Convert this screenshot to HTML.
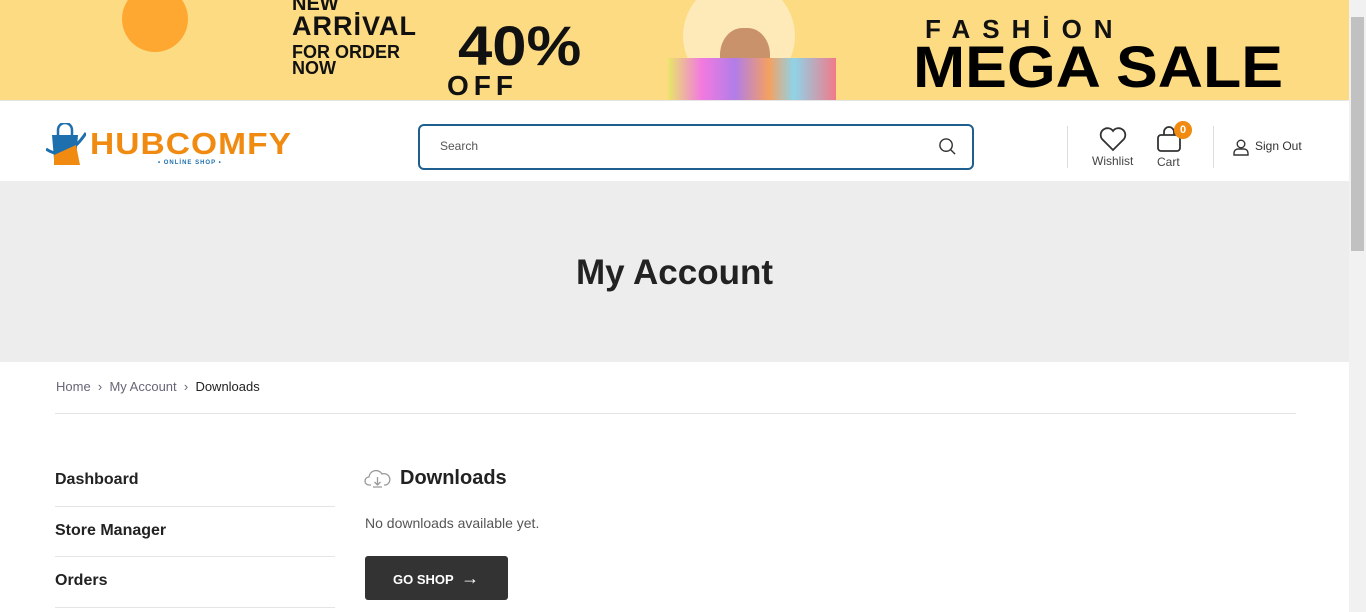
<!DOCTYPE html>
<html><head><meta charset="utf-8"><style>
*{margin:0;padding:0;box-sizing:border-box}
body{width:1366px;height:612px;overflow:hidden;font-family:"Liberation Sans",sans-serif;background:#fff;position:relative;color:#222}
.abs{position:absolute}
.banner{left:0;top:0;width:1349px;height:100px;background:#fcdb82;overflow:hidden}
.sb{left:1349px;top:0;width:17px;height:612px;background:#f1f1f1}
.sbt{left:1351px;top:17px;width:13px;height:234px;background:#c1c1c1}
.hdr{left:0;top:100px;width:1349px;height:81px;background:#fff;border-top:1px solid #e5e5e5}
.hero{left:0;top:181px;width:1349px;height:181px;background:#ededed}
</style></head><body>
<div class="abs banner">
 <div class="abs" style="left:122px;top:-14px;width:66px;height:66px;border-radius:50%;background:#fea832"></div>
 <div class="abs" style="left:292px;top:-6px;font-weight:900;font-size:20px;line-height:20px;color:#111">NEW<br><span style="font-size:27px;letter-spacing:1px;display:inline-block;margin-top:2px">ARRİVAL</span></div>
 <div class="abs" style="left:292px;top:44px;font-weight:bold;font-size:18px;line-height:16px;color:#111">FOR ORDER<br>NOW</div>
 <div class="abs" style="left:458px;top:18px;font-weight:900;font-size:56px;line-height:56px;color:#111;transform:scaleX(1.1);transform-origin:left">40%</div>
 <div class="abs" style="left:447px;top:70px;font-weight:900;font-size:28px;letter-spacing:5px;color:#111">OFF</div>
 <div class="abs" style="left:683px;top:-20px;width:112px;height:112px;border-radius:50%;background:#fdeab8"></div>
 <div class="abs" style="left:720px;top:28px;width:50px;height:60px;border-radius:45%;background:#c9926a"></div>
 <div class="abs" style="left:668px;top:58px;width:168px;height:42px;background:linear-gradient(90deg,#e9e56a,#f27ae0 20%,#b17de8 40%,#f5a060 60%,#8fd3e8 75%,#f07a8a)"></div>
 <div class="abs" style="left:925px;top:14px;font-weight:bold;font-size:26px;letter-spacing:12px;color:#111">FASHİON</div>
 <div class="abs" style="left:913px;top:38px;font-weight:900;font-size:58px;line-height:60px;color:#000;transform:scaleX(1.08);transform-origin:left">MEGA SALE</div>
</div>
<div class="abs sb"></div><div class="abs sbt"></div>
<div class="abs hdr">
 <svg class="abs" style="left:46px;top:22px" width="40" height="44" viewBox="0 0 40 44"><path d="M12 12 V7 a7 7 0 0 1 14 0 V12" fill="none" stroke="#1e6fae" stroke-width="2.5"/><path d="M6 12 H32 L30 36 H8Z" fill="#1e6fae"/><path d="M0 26 Q20 40 40 10" fill="none" stroke="#1e6fae" stroke-width="3"/><path d="M8 32 L30 22 L34 42 H8Z" fill="#f08a10"/></svg>
 <div class="abs" style="left:90px;top:26px;font-weight:bold;font-size:31px;letter-spacing:1px;color:#f08a10;line-height:34px;transform:scaleX(1.08);transform-origin:left">HUBCOMFY</div>
 <div class="abs" style="left:158px;top:59px;font-size:6px;font-weight:bold;color:#1e6fae;letter-spacing:1px">• ONLİNE SHOP •</div>
 <div class="abs" style="left:418px;top:23px;width:556px;height:46px;border:2px solid #1e5f90;border-radius:6px"></div>
 <div class="abs" style="left:440px;top:38px;font-size:12px;color:#555">Search</div>
 <svg class="abs" style="left:938px;top:36px" width="19" height="19" viewBox="0 0 20 20"><circle cx="8.5" cy="8.5" r="6.5" fill="none" stroke="#333" stroke-width="1.5"/><path d="M13.5 13.5 L18 18" stroke="#333" stroke-width="1.5"/></svg>
 <div class="abs" style="left:1067px;top:25px;width:1px;height:42px;background:#ddd"></div>
 <div class="abs" style="left:1213px;top:25px;width:1px;height:42px;background:#ddd"></div>
 <svg class="abs" style="left:1099px;top:26px" width="28" height="25" viewBox="0 0 28 25"><path d="M14 23 L3 12 A6.5 6.5 0 0 1 14 4 A6.5 6.5 0 0 1 25 12 Z" fill="none" stroke="#333" stroke-width="1.8"/></svg>
 <div class="abs" style="left:1092px;top:53px;font-size:12px;color:#444">Wishlist</div>
 <svg class="abs" style="left:1156px;top:25px" width="28" height="28" viewBox="0 0 28 28"><rect x="2" y="9" width="22" height="16" rx="3" fill="none" stroke="#333" stroke-width="1.8"/><path d="M8 9 V6 a5 5 0 0 1 10 0 V9" fill="none" stroke="#333" stroke-width="1.8"/></svg>
 <div class="abs" style="left:1174px;top:20px;width:18px;height:18px;border-radius:50%;background:#f08a10;color:#fff;font-size:11px;font-weight:bold;text-align:center;line-height:18px">0</div>
 <div class="abs" style="left:1157px;top:54px;font-size:12px;color:#444">Cart</div>
 <svg class="abs" style="left:1233px;top:38px" width="16" height="17" viewBox="0 0 16 17"><circle cx="8" cy="5" r="3.8" fill="none" stroke="#333" stroke-width="1.4"/><path d="M1 16 V14 a4 4 0 0 1 4-4 H11 a4 4 0 0 1 4 4 V16 Z" fill="none" stroke="#333" stroke-width="1.4"/></svg>
 <div class="abs" style="left:1255px;top:38px;font-size:12px;color:#333">Sign Out</div>
</div>
<div class="abs hero"><div style="text-align:center;margin-top:72px;font-size:35px;font-weight:bold;color:#222;letter-spacing:0px">My Account</div></div>
<div class="abs" style="left:56px;top:379px;font-size:13px;color:#667">Home &nbsp;›&nbsp; My Account &nbsp;›&nbsp; <span style="color:#222">Downloads</span></div>
<div class="abs" style="left:55px;top:413px;width:1241px;height:1px;background:#e5e5e5"></div>
<div class="abs" style="left:55px;top:471px;font-size:16px;font-weight:bold;color:#222">Dashboard</div>
<div class="abs" style="left:55px;top:506px;width:280px;height:1px;background:#e5e5e5"></div>
<div class="abs" style="left:55px;top:522px;font-size:16px;font-weight:bold;color:#222">Store Manager</div>
<div class="abs" style="left:55px;top:556px;width:280px;height:1px;background:#e5e5e5"></div>
<div class="abs" style="left:55px;top:572px;font-size:16px;font-weight:bold;color:#222">Orders</div>
<div class="abs" style="left:55px;top:607px;width:280px;height:1px;background:#e5e5e5"></div>
<svg class="abs" style="left:364px;top:468px" width="27" height="20" viewBox="0 0 27 20"><path d="M7 17 H5 a4 4 0 0 1 0-8 a7 7 0 0 1 13-3 a5 5 0 0 1 4 11 H20" fill="none" stroke="#999" stroke-width="1.3"/><path d="M13.5 9 V17 M10.5 14 L13.5 17 L16.5 14 M9 19 H18" fill="none" stroke="#999" stroke-width="1.3"/></svg>
<div class="abs" style="left:400px;top:467px;font-size:20px;font-weight:bold;color:#222">Downloads</div>
<div class="abs" style="left:365px;top:515px;font-size:14px;color:#555">No downloads available yet.</div>
<div class="abs" style="left:365px;top:556px;width:143px;height:44px;background:#333;border-radius:3px;color:#fff;font-size:13px;font-weight:bold;line-height:44px;padding-left:28px">GO SHOP <span style="font-size:18px;font-weight:normal;margin-left:4px">→</span></div>
</body></html>
